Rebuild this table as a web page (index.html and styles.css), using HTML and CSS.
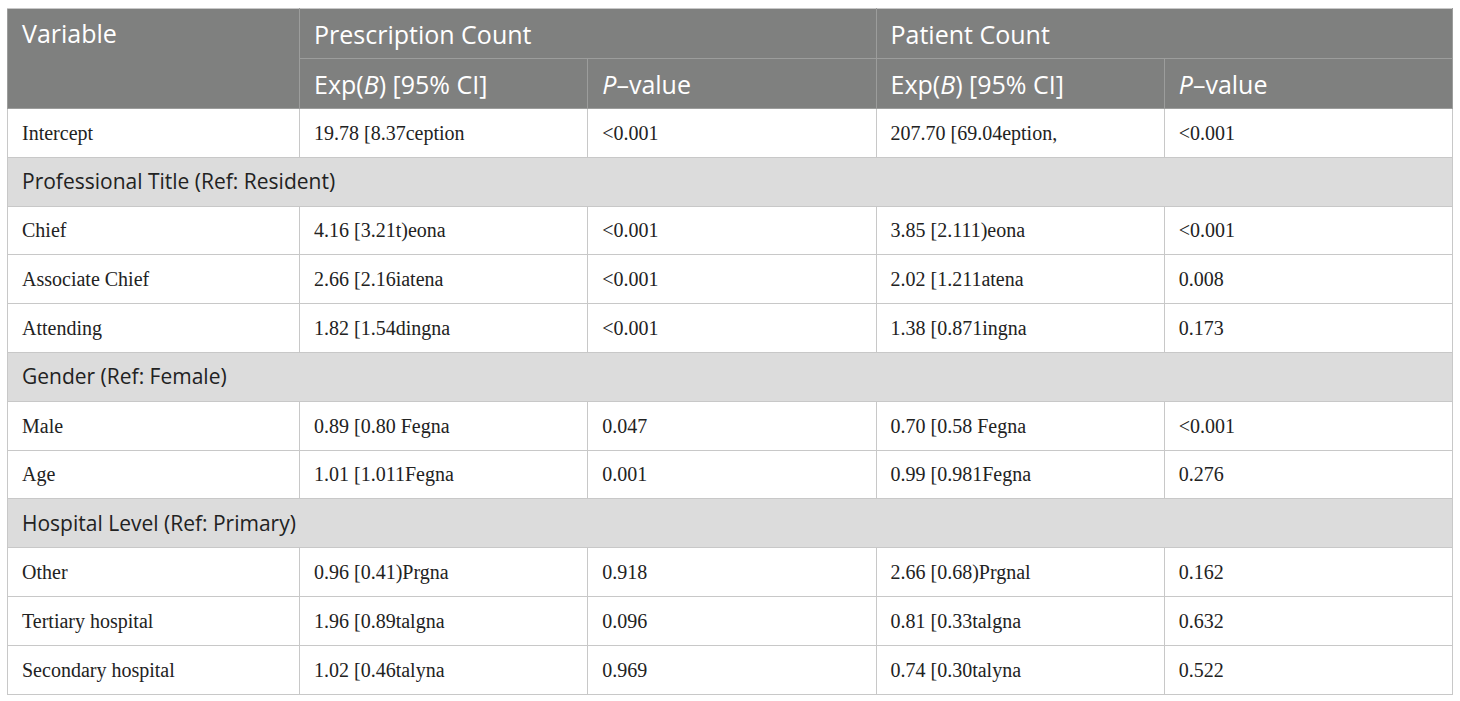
FILE: index.html
```html
<!DOCTYPE html>
<html lang="en">
<head>
<meta charset="UTF-8">
<title>Regression Results</title>
<link rel="stylesheet" href="styles.css">
</head>
<body>

<table class="results">
  <colgroup>
    <col class="col-var">
    <col class="col-num">
    <col class="col-num">
    <col class="col-num">
    <col class="col-num">
  </colgroup>
  <thead>
    <tr>
      <th rowspan="2" class="var-head">Variable</th>
      <th colspan="2">Prescription Count</th>
      <th colspan="2">Patient Count</th>
    </tr>
    <tr>
      <th>Exp(<i>B</i>) [95% CI]</th>
      <th><i>P</i>–value</th>
      <th>Exp(<i>B</i>) [95% CI]</th>
      <th><i>P</i>–value</th>
    </tr>
  </thead>
  <tbody>
    <tr><td>Intercept</td><td>19.78 [8.37ception</td><td>&lt;0.001</td><td>207.70 [69.04eption,</td><td>&lt;0.001</td></tr>
    <tr class="group"><td colspan="5">Professional Title (Ref: Resident)</td></tr>
    <tr><td>Chief</td><td>4.16 [3.21t)eona</td><td>&lt;0.001</td><td>3.85 [2.111)eona</td><td>&lt;0.001</td></tr>
    <tr><td>Associate Chief</td><td>2.66 [2.16iatena</td><td>&lt;0.001</td><td>2.02 [1.211atena</td><td>0.008</td></tr>
    <tr><td>Attending</td><td>1.82 [1.54dingna</td><td>&lt;0.001</td><td>1.38 [0.871ingna</td><td>0.173</td></tr>
    <tr class="group"><td colspan="5">Gender (Ref: Female)</td></tr>
    <tr><td>Male</td><td>0.89 [0.80 Fegna</td><td>0.047</td><td>0.70 [0.58 Fegna</td><td>&lt;0.001</td></tr>
    <tr><td>Age</td><td>1.01 [1.011Fegna</td><td>0.001</td><td>0.99 [0.981Fegna</td><td>0.276</td></tr>
    <tr class="group"><td colspan="5">Hospital Level (Ref: Primary)</td></tr>
    <tr><td>Other</td><td>0.96 [0.41)Prgna</td><td>0.918</td><td>2.66 [0.68)Prgnal</td><td>0.162</td></tr>
    <tr><td>Tertiary hospital</td><td>1.96 [0.89talgna</td><td>0.096</td><td>0.81 [0.33talgna</td><td>0.632</td></tr>
    <tr><td>Secondary hospital</td><td>1.02 [0.46talyna</td><td>0.969</td><td>0.74 [0.30talyna</td><td>0.522</td></tr>
  </tbody>
</table>

</body>
</html>
```

FILE: styles.css
```css
/* Results table */
body {
margin: 8px 7px;
background-color: #fff;
}

.results {
width: 1446px;
border-collapse: collapse;
table-layout: fixed;
font-family: "Liberation Serif", "Times New Roman", serif;
color: #222;
}

.col-var {
width: 292px;
}

.results th {
height: 49px;
padding: 0 14px;
background-color: #7f807f;
color: #fff;
font-family: "Open Sans", "Noto Sans", sans-serif;
font-size: 25px;
font-weight: normal;
text-align: left;
border: 1px solid #9c9d9c;
}

.results th i {
font-style: italic;
}

.results thead tr:first-child th {
border-top-color: #c8c8c8;
}

.var-head {
vertical-align: top;
padding-top: 7px !important;
}

.results td {
height: 47.8px;
padding: 0 14px;
font-size: 20px;
line-height: 1.2;
border: 1px solid #c8c8c8;
white-space: nowrap;
}

.group td {
background-color: #dcdcdc;
font-family: "Open Sans", "Noto Sans", sans-serif;
font-size: 21px;
}
```
